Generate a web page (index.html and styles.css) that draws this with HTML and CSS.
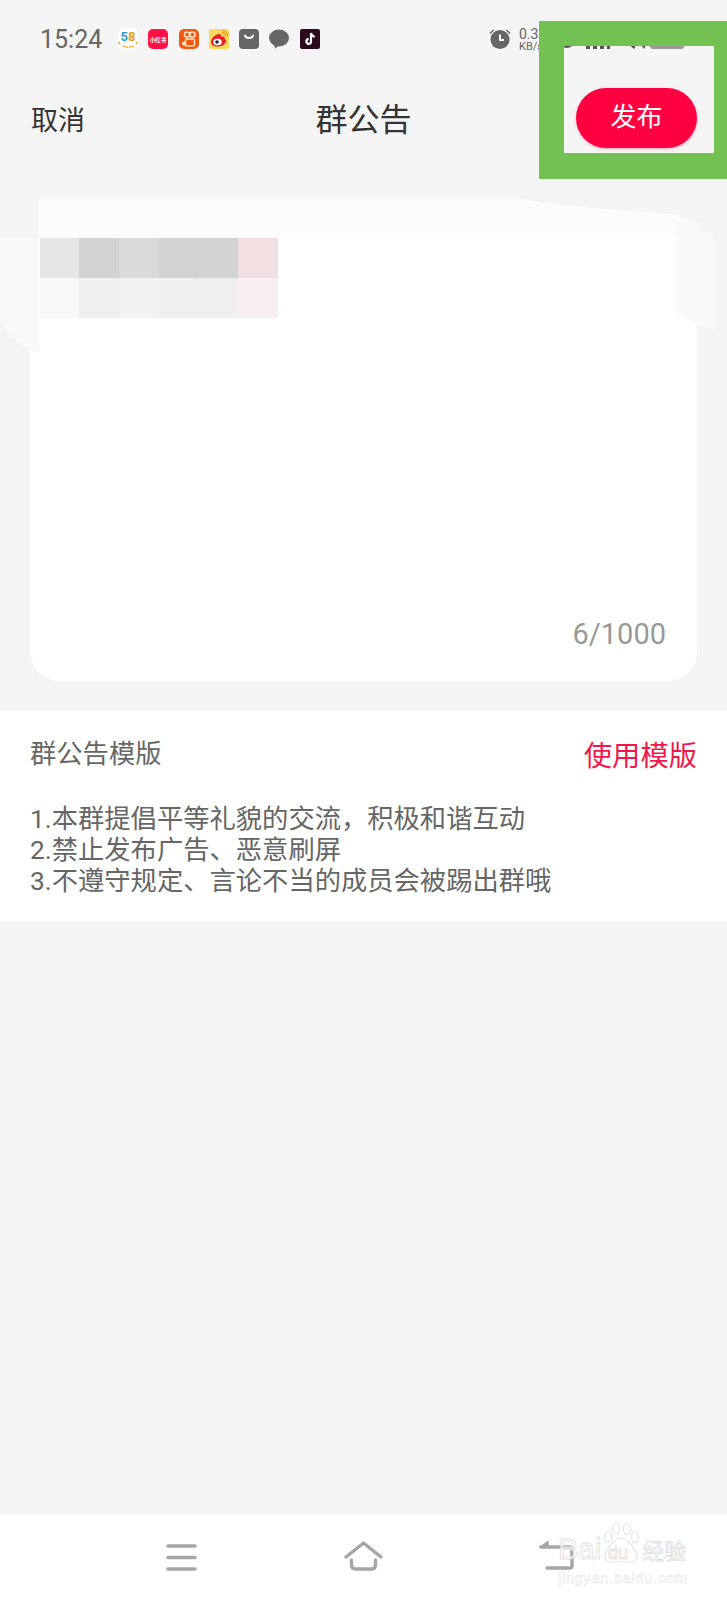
FILE: index.html
```html
<!DOCTYPE html>
<html lang="zh-CN">
<head>
    <meta charset="UTF-8">
    <meta name="viewport" content="width=device-width, initial-scale=1.0">
    <title>群公告</title>
    <link rel="stylesheet" href="styles.css">
</head>
<body>
    <div class="page">
        <div class="status-bar">
            <span class="time">15:24</span>
            <div class="app-icons">
                <svg class="app-icon" viewBox="0 0 20 20">
                    <rect width="20" height="20" rx="4" fill="#fff"/>
                    <text x="10" y="12" class="icon-58" text-anchor="middle"><tspan fill="#2a9fd0">5</tspan><tspan fill="#e8a020">8</tspan></text>
                    <path d="M1 13l1 3M5 17l3 1h5l3-1M19 13l-1 3" stroke="#f0a020" stroke-width="1.500" stroke-dasharray="2 1" fill="none"/>
                </svg>
                <svg class="app-icon" viewBox="0 0 20 20">
                    <rect width="20" height="20" rx="5" fill="#ff1144"/>
                    <text x="10" y="12.500" class="icon-xhs" text-anchor="middle">小红书</text>
                </svg>
                <svg class="app-icon" viewBox="0 0 20 20">
                    <rect width="20" height="20" rx="5" fill="#f4570f"/>
                    <circle cx="8" cy="5.500" r="2.600" fill="none" stroke="#ffe3c8" stroke-width="1.500"/>
                    <circle cx="13.500" cy="5.500" r="2.600" fill="none" stroke="#ffe3c8" stroke-width="1.500"/>
                    <rect x="6.500" y="10" width="9" height="7" rx="1.600" fill="none" stroke="#ffe3c8" stroke-width="1.500"/>
                    <path d="M6 12l-3 1.400v2.400l3 1.200z" fill="#ffe3c8"/>
                </svg>
                <svg class="app-icon" viewBox="0 0 20 20">
                    <rect width="20" height="20" rx="2" fill="#fbd85c"/>
                    <path d="M2 13c0-4 5-8 8-8 2 0 2.500 1.500 2 3 3-1 4.500 0 3.500 2 2 .5 2 2 1.500 3-1.500 3-5 4.500-8 4.500-4 0-7-1.500-7-4.500z" fill="#e8202c"/>
                    <ellipse cx="8.500" cy="13" rx="4.200" ry="3.200" fill="#fff"/>
                    <circle cx="8" cy="13" r="1.800" fill="#222"/>
                    <path d="M13 3.500c2.500 0 4 1.500 4 4M13 1.500c3.500 0 6 2.500 6 6" stroke="#f08a1c" stroke-width="1.100" fill="none"/>
                </svg>
                <svg class="app-icon" viewBox="0 0 20 20">
                    <rect width="20" height="20" rx="4" fill="#666"/>
                    <path d="M6 6.500c.8 3.400 7.200 3.400 8 0" stroke="#fff" stroke-width="2" stroke-linecap="round" fill="none"/>
                </svg>
                <svg class="app-icon" viewBox="0 0 20 20">
                    <ellipse cx="10" cy="9" rx="10" ry="8.500" fill="#666"/>
                    <path d="M5 15l1 4.500 4-3z" fill="#666"/>
                </svg>
                <svg class="app-icon" viewBox="0 0 20 20">
                    <rect width="20" height="20" rx="2" fill="#2a0a1c"/>
                    <path d="M11 4v8.500a2.300 2.300 0 1 1-2.300-2.300M11 4c.3 2 1.700 3.400 3.700 3.600" stroke="#fff" stroke-width="2.200" fill="none"/>
                </svg>
            </div>
            <svg class="alarm" viewBox="0 0 22 20">
                <circle cx="11" cy="10.500" r="9.500" fill="#666"/>
                <path d="M1 4.500L4.500 1M21 4.500L17.500 1" stroke="#666" stroke-width="1.500"/>
                <path d="M11 5.500v5.500h4" stroke="#fff" stroke-width="2" fill="none"/>
            </svg>
            <div class="speed">
                <span class="speed-value">0.30</span>
                <span class="speed-unit">KB/s</span>
            </div>
            <svg class="system-icons" viewBox="0 0 120 20">
                <circle cx="3" cy="12" r="7" fill="#555"/>
                <path d="M22 6h4v14h-4zM29 6h4v14h-4zM36 6h4v14h-4zM43 6h3v14h-3z" fill="#555"/>
                <path d="M63 14l7 6 3-6zM76 14l4 6 3-6z" fill="#555"/>
                <rect x="86" y="8" width="34" height="12" rx="3" fill="#999"/>
            </svg>
        </div>

        <div class="nav-bar">
            <span class="nav-cancel">取消</span>
            <span class="nav-title">群公告</span>
            <span class="publish-btn">发布</span>
        </div>

        <div class="editor-card">
            <svg class="retouch" viewBox="0 190 727 180">
                <path d="M30 190H727V222H691Q682 215 670 214Q600 209 560 205Q540 203 524 199H39V238H30Z" fill="#f5f5f5"/>
                <path d="M39 199H524Q540 203 560 205Q600 209 670 214Q682 215 691 222H676V238H39Z" fill="#fcfcfc"/>
                <path d="M0 238H39V353Q12 345 0 318Z" fill="#f9f9f9"/>
                <path d="M676 222H691Q705 230 715 240V330Q695 326 676 313Z" fill="#f9f9f9"/>
            </svg>
            <div class="mosaic">
                <span class="cell c1"></span>
                <span class="cell c2"></span>
                <span class="cell c3"></span>
                <span class="cell c2"></span>
                <span class="cell c4"></span>
                <span class="cell c5"></span>
                <span class="cell c6"></span>
                <span class="cell c7"></span>
                <span class="cell c8"></span>
                <span class="cell c7"></span>
                <span class="cell c7"></span>
                <span class="cell c9"></span>
            </div>
            <span class="counter">6/1000</span>
        </div>

        <div class="template">
            <div class="template-head">
                <span class="template-title">群公告模版</span>
                <span class="template-use">使用模版</span>
            </div>
            <div class="template-body">
                <p>1.本群提倡平等礼貌的交流，积极和谐互动</p>
                <p>2.禁止发布广告、恶意刷屏</p>
                <p>3.不遵守规定、言论不当的成员会被踢出群哦</p>
            </div>
        </div>

        <div class="bottom-nav">
            <svg class="nav-icon menu-icon" viewBox="0 0 31 27">
                <path d="M2 2H29M2 13.500H29M2 25H29" stroke="#a6a6a6" stroke-width="3.600" stroke-linecap="round"/>
            </svg>
            <svg class="nav-icon home-icon" viewBox="0 0 39 30">
                <path d="M2 16L19.500 2L37 16" stroke="#a6a6a6" stroke-width="3.400" stroke-linecap="round" stroke-linejoin="round" fill="none"/>
                <path d="M7.500 19V24Q7.500 28 11.500 28H27.500Q31.500 28 31.500 24V19" stroke="#a6a6a6" stroke-width="3.400" stroke-linecap="round" fill="none"/>
            </svg>
            <svg class="nav-icon back-icon" viewBox="0 0 35 30">
                <path d="M2 7H31Q33 7 33 9V26Q33 28 31 28H8" stroke="#a6a6a6" stroke-width="3.400" stroke-linecap="round" fill="none"/>
                <path d="M1 7L9 1.500V7Z" fill="#a6a6a6" stroke="#a6a6a6" stroke-width="1.500" stroke-linejoin="round"/>
            </svg>
            <div class="watermark">
                <svg class="paw" viewBox="0 0 38 41">
                    <ellipse cx="6" cy="15" rx="3.500" ry="5.500" fill="none" stroke="#e4e4e4" stroke-width="1.200"/>
                    <ellipse cx="14" cy="7" rx="3.500" ry="5.500" fill="none" stroke="#e4e4e4" stroke-width="1.200"/>
                    <ellipse cx="25" cy="7" rx="3.500" ry="5.500" fill="none" stroke="#e4e4e4" stroke-width="1.200"/>
                    <ellipse cx="33" cy="15" rx="3.500" ry="5.500" fill="none" stroke="#e4e4e4" stroke-width="1.200"/>
                    <path d="M19 16C12 16 2 30 3 35C4 41 13 41 19 39C25 41 34 41 35 35C36 30 26 16 19 16Z" fill="rgba(255,255,255,.6)" stroke="#e4e4e4" stroke-width="1.200"/>
                </svg>
                <div class="wm-row">
                    <span class="wm-bai">Bai</span>
                    <span class="wm-du">du</span>
                    <span class="wm-cn">经验</span>
                </div>
                <span class="wm-url">jingyan.baidu.com</span>
            </div>
        </div>

        <div class="highlight"></div>
    </div>
</body>
</html>
```

FILE: styles.css
```css
* {
    box-sizing: border-box;
}
body {
    margin: 0;
    background: #f5f5f5;
    font-family: 'Roboto', 'Noto Sans CJK SC', sans-serif;
}
.page {
    position: relative;
    width: 727px;
    height: 1600px;
    display: flex;
    flex-direction: column;
    overflow: hidden;
}

/* status bar */
.status-bar {
    height: 78px;
    padding: 0 43px 0 40px;
    display: flex;
    align-items: center;
    color: #666;
}
.time {
    font-size: 25px;
    width: 63px;
}
.app-icons {
    display: flex;
    gap: 10.300px;
    margin-left: 15px;
}
.app-icon {
    width: 20px;
    height: 20px;
    display: block;
}
.icon-58 {
    font-family: 'Roboto', sans-serif;
    font-size: 13px;
    font-weight: 700;
}
.icon-xhs {
    font-family: 'Noto Sans CJK SC', sans-serif;
    font-size: 5.500px;
    font-weight: 700;
    fill: #fff;
}
.alarm {
    width: 22px;
    height: 20px;
    margin-left: auto;
}
.speed {
    width: 36px;
    margin: 0 9px 0 8px;
    display: flex;
    flex-direction: column;
    line-height: 1;
}
.speed-value {
    font-size: 14px;
}
.speed-unit {
    font-size: 11px;
}
.system-icons {
    width: 120px;
    height: 20px;
}

/* header */
.nav-bar {
    height: 80px;
    padding: 0 30px 0 31px;
    display: flex;
    align-items: center;
    justify-content: space-between;
    position: relative;
}
.nav-cancel {
    font-size: 27px;
    color: #333;
}
.nav-title {
    position: absolute;
    left: 0;
    right: 0;
    top: 22px;
    text-align: center;
    font-size: 32px;
    line-height: 40px;
    color: #333;
}
.publish-btn {
    position: relative;
    width: 121px;
    height: 60px;
    line-height: 58px;
    border-radius: 30px;
    background: #ff0040;
    color: #fff;
    font-size: 26px;
    text-align: center;
    box-shadow: 0 1px 3px rgba(255, 0, 64, 0.3);
}

/* card with the painted-out text */
.editor-card {
    position: relative;
    height: 482px;
    margin: 41px 30px 0;
    padding: 39px 0 0 9.500px;
    background: #fff;
    border-radius: 0 0 30px 30px;
}
.retouch {
    position: absolute;
    left: -30px;
    top: -9px;
    width: 727px;
    height: 180px;
}
.mosaic {
    position: relative;
    display: grid;
    grid-template-columns: repeat(6, 39.800px);
    grid-auto-rows: 40px;
}
.c1 { background: #e6e6e6; }
.c2 { background: #d2d2d2; }
.c3 { background: #dadada; }
.c4 { background: #d4d4d4; }
.c5 { background: #f2dfe2; }
.c6 { background: #f8f8f8; }
.c7 { background: #efefef; }
.c8 { background: #f2f2f2; }
.c9 { background: #f8eeef; }
.counter {
    position: absolute;
    right: 31px;
    bottom: 30px;
    font-size: 29px;
    line-height: 34px;
    color: #999;
}

/* template */
.template {
    height: 210px;
    margin-top: 30px;
    padding: 23px 30px 0;
    background: #fff;
}
.template-head {
    display: flex;
    justify-content: space-between;
    height: 40px;
}
.template-title {
    font-size: 26.300px;
    line-height: 40px;
    color: #666;
}
.template-use {
    font-size: 28.300px;
    line-height: 46px;
    color: #f0184a;
}
.template-body {
    margin-top: 30px;
    font-size: 26.300px;
    line-height: 31px;
    color: #666;
}
.template-body p {
    margin: 0;
}

/* bottom nav */
.bottom-nav {
    position: relative;
    height: 85px;
    margin-top: auto;
    background: #fff;
}
.nav-icon {
    position: absolute;
    display: block;
}
.menu-icon {
    left: 166px;
    top: 29px;
    width: 31px;
    height: 27px;
}
.home-icon {
    left: 344px;
    top: 26px;
    width: 39px;
    height: 30px;
}
.back-icon {
    left: 539px;
    top: 25px;
    width: 35px;
    height: 30px;
}
.watermark {
    position: absolute;
    left: 558px;
    top: 7px;
    width: 132px;
    height: 64px;
}
.paw {
    position: absolute;
    left: 44px;
    top: 0;
    width: 38px;
    height: 41px;
}
.wm-row {
    position: relative;
    display: flex;
    align-items: baseline;
    padding-top: 10px;
}
.wm-bai,
.wm-du,
.wm-cn,
.wm-url {
    font-family: 'Liberation Sans', sans-serif;
    color: rgba(255, 255, 255, 0.6);
    -webkit-text-stroke: 0.800px #e0e0e0;
}
.wm-bai {
    font-size: 30px;
    width: 50px;
}
.wm-du {
    font-size: 18px;
    width: 34px;
}
.wm-cn {
    font-family: 'Noto Sans CJK SC', sans-serif;
    font-size: 22px;
    color: #fff;
}
.wm-url {
    position: absolute;
    left: 0;
    top: 48px;
    font-size: 15px;
    line-height: 16px;
    letter-spacing: 0.500px;
    -webkit-text-stroke: 0.400px #e0e0e0;
}

/* green marker around the publish button */
.highlight {
    position: absolute;
    left: 539px;
    top: 21px;
    width: 188px;
    height: 158px;
    border: solid #72c152;
    border-width: 25px 13px 26px 25px;
}
```
